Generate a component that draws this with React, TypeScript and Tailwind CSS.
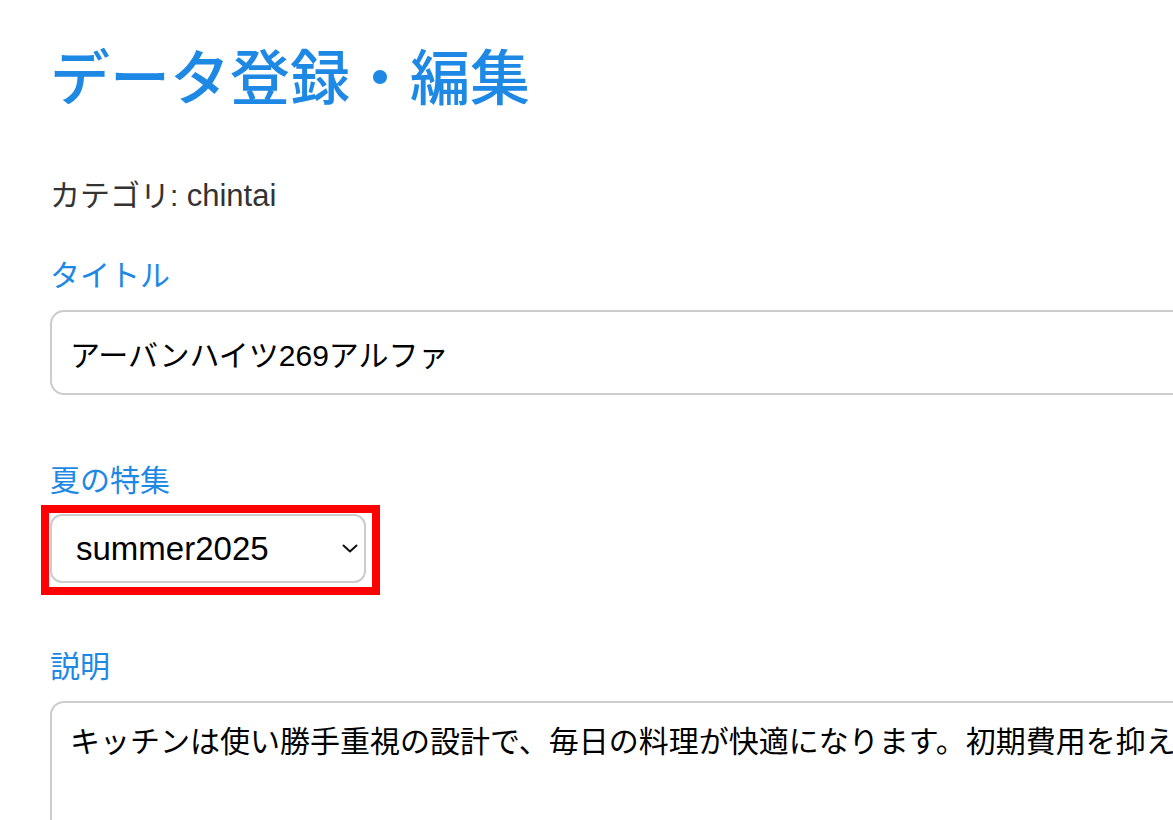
import { useState } from 'react';

const font = { fontFamily: '"Liberation Sans", "Noto Sans CJK JP", sans-serif' };

export default function App() {
  const [title, setTitle] = useState('アーバンハイツ269アルファ');
  const [feature, setFeature] = useState('summer2025');
  const [desc, setDesc] = useState(
    'キッチンは使い勝手重視の設計で、毎日の料理が快適になります。初期費用を抑えた物件です。'
  );

  return (
    <div className="w-full h-[820px] overflow-hidden bg-white" style={font}>
      <div className="px-[50px] pt-[44px]">
        <h1 className="text-[60px] leading-[72px] font-medium text-[#1e88e5] whitespace-nowrap">
          データ登録・編集
        </h1>

        <p className="mt-[62px] text-[30px] leading-[36px] text-[#333]">
          カテゴリ: <span className="text-[31px]">chintai</span>
        </p>

        <label className="block mt-[44px] text-[30px] leading-[36px] text-[#1e88e5]">タイトル</label>
        <input
          value={title}
          onChange={(e) => setTitle(e.target.value)}
          className="block mt-[16px] w-[1400px] h-[85px] px-[18px] border-2 border-[#cccccc] rounded-[14px] text-[30px] text-black outline-none"
        />

        <label className="block mt-[68px] text-[30px] leading-[36px] text-[#1e88e5]">夏の特集</label>
        <div className="inline-block mt-[6px] -ml-[9px] border-8 border-[#ff0000] pl-[1px] pr-[6px] pt-[1px] pb-[4px]">
          <div className="relative w-[316px]">
            <select
              value={feature}
              onChange={(e) => setFeature(e.target.value)}
              className="block w-[316px] h-[69px] pl-[24px] pr-[40px] appearance-none bg-white border-2 border-[#cccccc] rounded-[12px] text-[33px] text-black outline-none"
            >
              <option value="summer2025">summer2025</option>
              <option value="summer2024">summer2024</option>
            </select>
            <svg
              className="absolute right-[8px] top-[30px] pointer-events-none"
              width="16"
              height="9"
              viewBox="0 0 16 9"
              fill="none"
            >
              <path d="M1.5 1.5 L8 7.5 L14.5 1.5" stroke="#111" strokeWidth="2" strokeLinecap="round" strokeLinejoin="round" />
            </svg>
          </div>
        </div>

        <label className="block mt-[54px] text-[30px] leading-[36px] text-[#1e88e5]">説明</label>
        <textarea
          value={desc}
          onChange={(e) => setDesc(e.target.value)}
          className="block mt-[16px] w-[1400px] h-[240px] px-[18px] pt-[21px] border-2 border-[#cccccc] rounded-[14px] text-[30px] leading-[36px] text-black outline-none resize-none"
        />
      </div>
    </div>
  );
}
